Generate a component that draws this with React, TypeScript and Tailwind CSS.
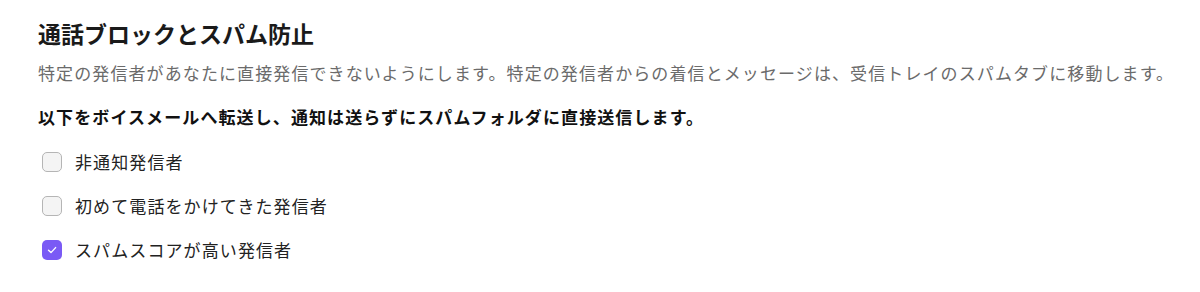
import React, { useState } from "react";

const options = [
  { id: "anon", label: "非通知発信者", checked: false },
  { id: "first", label: "初めて電話をかけてきた発信者", checked: false },
  { id: "spam", label: "スパムスコアが高い発信者", checked: true },
];

export default function App() {
  const [checked, setChecked] = useState<Record<string, boolean>>(
    Object.fromEntries(options.map(o => [o.id, o.checked]))
  );

  return (
    <div
      className="w-[1200px] h-[292px] bg-white pl-[38px] pt-[19px]"
      style={{ fontFamily: '"Noto Sans CJK JP", "Noto Sans", sans-serif' }}
    >
      <h2 className="text-[23px] leading-[28px] font-bold text-[#1a1a1a]">通話ブロックとスパム防止</h2>
      <p className="mt-[14px] text-[17px] leading-[24px] tracking-[1.1px] text-[#6b6b6b]">
        特定の発信者があなたに直接発信できないようにします。特定の発信者からの着信とメッセージは、受信トレイのスパムタブに移動します。
      </p>
      <p className="mt-[20px] text-[17px] leading-[24px] tracking-[1.1px] font-bold text-[#111]">
        以下をボイスメールへ転送し、通知は送らずにスパムフォルダに直接送信します。
      </p>

      {/* Options */}
      <div className="mt-[21px] flex flex-col gap-[20px]">
        {options.map(o => (
          <label key={o.id} className="flex items-center gap-[13px] pl-[4px] cursor-pointer h-[24px]">
            <button
              type="button"
              onClick={() => setChecked(p => ({ ...p, [o.id]: !p[o.id] }))}
              className={
                checked[o.id]
                  ? "w-[20px] h-[20px] rounded-[5px] bg-[#7a5af5] flex items-center justify-center"
                  : "w-[20px] h-[20px] rounded-[5px] bg-[#f4f4f4] border border-[#b5b5b5]"
              }
            >
              {checked[o.id] && (
                <svg width="12" height="12" viewBox="0 0 12 12" fill="none">
                  <path d="M2.5 6.2 L5 8.6 L9.6 3.6" stroke="white" strokeWidth="1.4" strokeLinecap="round" strokeLinejoin="round" />
                </svg>
              )}
            </button>
            <span className="text-[17px] leading-[24px] tracking-[1.1px] text-[#222]">{o.label}</span>
          </label>
        ))}
      </div>
    </div>
  );
}
